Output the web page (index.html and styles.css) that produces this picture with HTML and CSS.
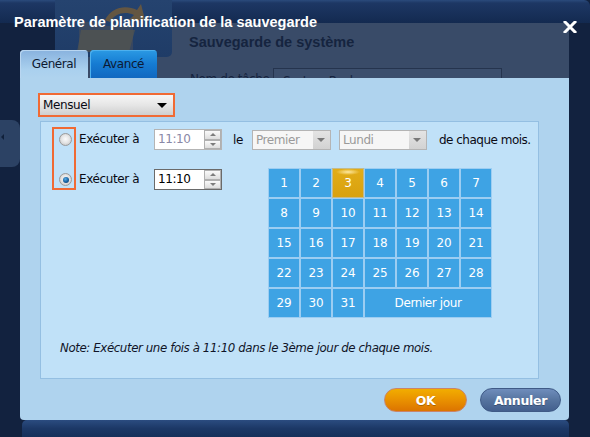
FILE: index.html
```html
<!DOCTYPE html>
<html lang="fr">
<head>
<meta charset="utf-8">
<title>Paramètre de planification de la sauvegarde</title>
<link rel="stylesheet" href="styles.css">
</head>
<body>
<div class="backdrop">
  <div class="bd bd-top"></div>
  <div class="bd bd-gray"></div>
  <div class="bd bd-logo">
    <svg width="117" height="57" viewBox="0 0 117 57">
      <path d="M24 22 L44 22 L48 26 L78 26 L78 50 L24 50 Z" fill="#3e4a5e" opacity="0.8"/>
      <path d="M26 30 L80 30 L74 52 L22 52 Z" fill="#55554f" opacity="0.7"/>
      <path d="M50 20 C56 8 70 4 82 10 L86 4 L90 20 L74 20 L79 15 C70 11 60 13 55 22 Z" fill="#7a5e34" opacity="0.75"/>
    </svg>
  </div>
  <div class="bd bd-heading">Sauvegarde de système</div>
  <div class="bd bd-label">Nom de tâche</div>
  <div class="bd bd-input">System Backup</div>
  <div class="bd bd-side"><span class="bd-arrow"></span></div>
</div>

<div class="dialog">
  <div class="titlebar">
    <span class="title">Paramètre de planification de la sauvegarde</span>
    <svg class="close" width="14" height="12" viewBox="0 0 14 12">
      <path d="M2 1 L12 11 M12 1 L2 11" stroke="#ffffff" stroke-width="3" stroke-linecap="square"/>
    </svg>
  </div>
  <div class="tabs">
    <div class="tab active">Général</div>
    <div class="tab other">Avancé</div>
  </div>
  <div class="panel">
    <div class="dropdown"><span>Mensuel</span><span class="caret"></span></div>
    <div class="inner">
      <div class="inner-top">
        <div class="radiobox">
          <span class="radio"></span>
          <span class="radio checked"></span>
        </div>
        <div class="rows">
          <div class="row">
            <span class="lbl">Exécuter à</span>
            <div class="time disabled"><span class="tv">11:10</span><span class="spin"><i class="up"></i><i class="down"></i></span></div>
            <span class="le">le</span>
            <div class="select s1"><span>Premier</span><span class="sbtn"><i></i></span></div>
            <div class="select s2"><span>Lundi</span><span class="sbtn"><i></i></span></div>
            <span class="tail">de chaque mois.</span>
          </div>
          <div class="row row2">
            <span class="lbl">Exécuter à</span>
            <div class="time"><span class="tv">11:10</span><span class="spin"><i class="up"></i><i class="down"></i></span></div>
            <div class="cal">
              <span class="day">1</span><span class="day">2</span><span class="day sel">3</span><span class="day">4</span><span class="day">5</span><span class="day">6</span><span class="day">7</span>
              <span class="day">8</span><span class="day">9</span><span class="day">10</span><span class="day">11</span><span class="day">12</span><span class="day">13</span><span class="day">14</span>
              <span class="day">15</span><span class="day">16</span><span class="day">17</span><span class="day">18</span><span class="day">19</span><span class="day">20</span><span class="day">21</span>
              <span class="day">22</span><span class="day">23</span><span class="day">24</span><span class="day">25</span><span class="day">26</span><span class="day">27</span><span class="day">28</span>
              <span class="day">29</span><span class="day">30</span><span class="day">31</span><span class="day last">Dernier jour</span>
            </div>
          </div>
        </div>
      </div>
      <p class="note">Note: Exécuter une fois à 11:10 dans le 3ème jour de chaque mois.</p>
    </div>
    <div class="footer">
      <button class="btn ok">OK</button>
      <button class="btn cancel">Annuler</button>
    </div>
  </div>
  <div class="bottomband"></div>
</div>
</body>
</html>
```

FILE: styles.css
```css
* { box-sizing: border-box; }

body {
  margin: 0;
  width: 590px;
  height: 437px;
  overflow: hidden;
  position: relative;
  background: #12223f;
  font-family: "DejaVu Sans", sans-serif;
  font-size: 12px;
  letter-spacing: -0.4px;
  color: #0e1a30;
}

/* ---------- window seen behind the dialog ---------- */
.backdrop { position: absolute; inset: 0; }
.bd { position: absolute; }
.bd-top {
  left: 0; top: 0; width: 590px; height: 23px;
  background: linear-gradient(#2b4b7c 0, #1d3764 3px, #132a50 100%);
  border-radius: 0 6px 0 0;
}
.bd-gray { left: 55px; top: 23px; width: 514px; height: 55px; background: #394b68; }
.bd-logo {
  left: 55px; top: 0; width: 117px; height: 57px;
  background: linear-gradient(#25436f, #1f3c67);
  border-radius: 0 0 5px 5px;
}
.bd-logo svg { display: block; }
.bd-heading {
  left: 189px; top: 34px;
  font: bold 14.5px "Liberation Sans", sans-serif;
  letter-spacing: 0;
  color: #15243f;
}
.bd-label { left: 190px; top: 72px; color: #15243f; }
.bd-input {
  left: 273px; top: 68px; width: 229px; height: 22px;
  border: 1px solid #25344e;
  background: #3c4f6d;
  padding: 3px 0 0 9px;
  line-height: 18px;
  color: #15243f;
}
.bd-side {
  left: 0; top: 120px; width: 20px; height: 47px;
  background: #2c4264;
  border-radius: 0 8px 8px 0;
}
.bd-arrow {
  position: absolute; left: 1px; top: 14px;
  border-right: 3px solid #10203a;
  border-top: 3px solid transparent;
  border-bottom: 3px solid transparent;
}

/* ---------- dialog ---------- */
.dialog {
  position: relative;
  height: 437px;
  display: flex;
  flex-direction: column;
}

.titlebar {
  height: 50px;
  display: flex;
  justify-content: space-between;
  align-items: flex-start;
  padding: 0 13px 0 14px;
}
.title {
  margin-top: 14px;
  font: bold 14.5px/17px "Liberation Sans", sans-serif;
  letter-spacing: 0;
  color: #ffffff;
}
.close { margin-top: 21px; }

.tabs {
  height: 28px;
  display: flex;
  gap: 2px;
  padding-left: 20px;
}
.tab {
  height: 28px;
  display: flex;
  align-items: center;
  justify-content: center;
  border-radius: 4px 4px 0 0;
  color: #0e1a30;
}
.tab.active {
  width: 68px;
  background: linear-gradient(#88b2de, #aad0ee 70%, #afd3ee);
  box-shadow: inset 1px 1px 0 #b9d6f1;
}
.tab.other {
  width: 67px;
  background: linear-gradient(#2b9ae4, #157bd2 50%, #1168c0);
  box-shadow: inset 1px 1px 0 #4db0ee;
  color: #0c1a34;
}

.panel {
  height: 342px;
  margin: 0 21px 0 20px;
  background: #afd3ee;
  padding: 15px 8px 0 18px;
  display: flex;
  flex-direction: column;
  border-radius: 0 0 4px 4px;
}

.dropdown {
  width: 137px;
  height: 24px;
  border: 2px solid #f06a34;
  background: linear-gradient(#f6f6f6, #e6e6e6 50%, #cfcfcf);
  display: flex;
  align-items: center;
  justify-content: space-between;
  padding: 0 6px 0 3px;
  color: #0a0a14;
}
.caret {
  border-top: 5px solid #000;
  border-left: 5px solid transparent;
  border-right: 5px solid transparent;
}

.inner {
  margin: 4px 0 0 2px;
  width: 499px;
  height: 258px;
  background: #c0e1f8;
  border: 1px solid #94bfe2;
  padding: 5px 0 0 11px;
}

.inner-top { display: flex; align-items: flex-start; }

.radiobox {
  width: 24px;
  height: 63px;
  border: 2px solid #f06a34;
  padding: 4px 0 0 5px;
  display: flex;
  flex-direction: column;
  gap: 27px;
}
.radio {
  display: block;
  width: 13px;
  height: 13px;
  border-radius: 50%;
  border: 1px solid #9a9a9a;
  background: radial-gradient(circle at 50% 45%, #fbfbfb 0, #e6e6e6 45%, #bdbdbd 100%);
  position: relative;
}
.radio.checked::after {
  content: "";
  position: absolute;
  left: 2.5px; top: 2.5px;
  width: 6px; height: 6px;
  border-radius: 50%;
  background: radial-gradient(circle at 40% 35%, #5aaee6 0, #155f9f 55%, #0a3568 100%);
}

.rows {
  margin: 2px 0 0 3px;
  display: flex;
  flex-direction: column;
  gap: 19px;
}
.row { display: flex; align-items: center; height: 21px; }
.row2 { align-items: flex-start; height: auto; }

.lbl { width: 75px; line-height: 21px; color: #0a0a14; }

.time {
  width: 68px;
  height: 21px;
  display: flex;
  border: 1px solid #6a6a6a;
  background: #ffffff;
}
.time.disabled { border-color: #b4b4b4; }
.tv {
  flex: 1;
  padding-left: 3px;
  line-height: 19px;
  color: #000000;
}
.time.disabled .tv { color: #8a88a6; }
.spin {
  width: 17px;
  display: flex;
  flex-direction: column;
}
.spin i {
  flex: 1;
  display: flex;
  align-items: center;
  justify-content: center;
  border: 1px solid #b0b0b0;
  background: linear-gradient(#fafafa, #dddddd);
}
.spin i::before {
  content: "";
  border-left: 3px solid transparent;
  border-right: 3px solid transparent;
}
.spin .up::before { border-bottom: 3px solid #7c7c7c; }
.spin .down::before { border-top: 3px solid #7c7c7c; }

.le { margin-left: 11px; color: #0a0a14; }

.select {
  height: 20px;
  display: flex;
  justify-content: space-between;
  border: 1px solid #b4b4b4;
  background: #f6f6f6;
  color: #9a9a9a;
  line-height: 18px;
  padding-left: 3px;
}
.s1 { width: 79px; margin-left: 9px; }
.s2 { width: 88px; margin-left: 8px; }
.sbtn {
  width: 17px;
  background: linear-gradient(#e4e4e4, #d2d2d2);
  display: flex;
  align-items: center;
  justify-content: center;
}
.sbtn i {
  border-top: 4px solid #787878;
  border-left: 4px solid transparent;
  border-right: 4px solid transparent;
}
.tail { margin-left: 12px; color: #0a0a14; letter-spacing: -0.5px; }

.cal {
  margin-left: 47px;
  display: grid;
  grid-template-columns: repeat(7, 30px);
  grid-auto-rows: 28px;
  gap: 2px;
}
.day {
  background: #3ea3e4;
  color: #ffffff;
  display: flex;
  align-items: center;
  justify-content: center;
  letter-spacing: -0.2px;
  box-shadow: 0 0 0 1px rgba(125, 190, 236, 0.55);
}
.day.sel {
  background:
    radial-gradient(ellipse 12px 3px at 50% 3px, rgba(255, 236, 170, 0.95), rgba(255, 236, 170, 0) 100%),
    linear-gradient(#e2ad18, #d9a10e);
  box-shadow: 0 0 0 1px rgba(200, 150, 30, 0.5);
}
.day.last { grid-column: span 4; letter-spacing: -0.4px; }

.note {
  margin: 24px 0 0 8px;
  font-size: 11.8px;
  line-height: 15px;
  font-style: italic;
  color: #101428;
}

.footer {
  margin-top: 9px;
  display: flex;
  justify-content: flex-end;
  gap: 13px;
}
.btn {
  height: 24px;
  border-radius: 12px;
  font-family: "DejaVu Sans", sans-serif;
  font-weight: bold;
  font-size: 12.5px;
  letter-spacing: -0.3px;
  color: #ffffff;
  padding: 0;
  text-shadow: 0 1px 0 rgba(0, 0, 0, 0.25);
}
.ok {
  width: 83px;
  border: 1px solid #c9846a;
  background: linear-gradient(#f2ad00, #ea9400 45%, #dc7400);
}
.cancel {
  width: 81px;
  border: 1px solid #3f5a86;
  background: linear-gradient(#6f8dbc, #56749f 50%, #435f8e);
}

.bottomband {
  height: 17px;
  margin: 0 21px 0 22px;
  border-radius: 5px 5px 0 0;
  background: linear-gradient(#2b4c80, #1c3866 50%, #16305a);
}
```
